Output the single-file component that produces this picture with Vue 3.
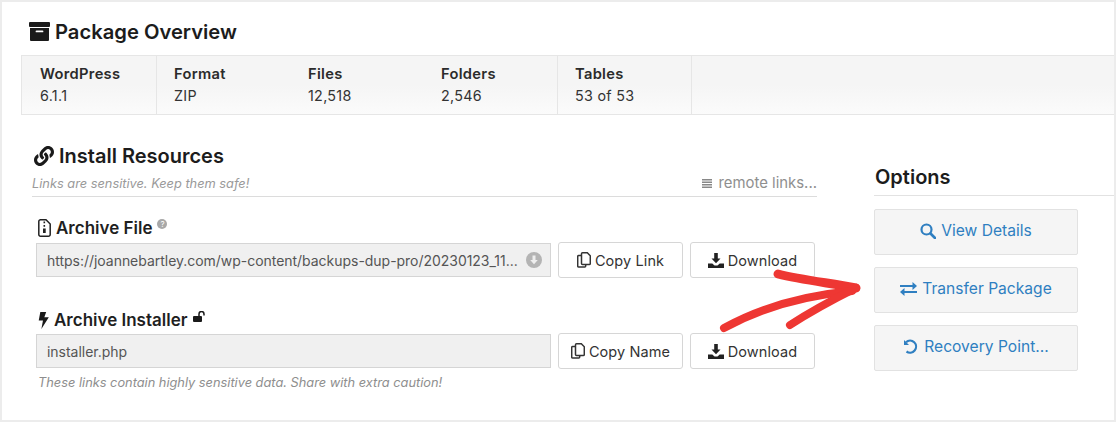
<script setup>
const stats = [
  { label: 'WordPress', value: '6.1.1', w: 135, line: true },
  { label: 'Format', value: 'ZIP', w: 134, line: false },
  { label: 'Files', value: '12,518', w: 133, line: false },
  { label: 'Folders', value: '2,546', w: 134, line: true },
  { label: 'Tables', value: '53 of 53', w: 134, line: true }
]
</script>

<template>
  <div class="page">
    <h1 class="title">
      <svg class="ic-box" viewBox="0 0 21 19"><path d="M1 0h19a1 1 0 0 1 1 1v3a1 1 0 0 1-1 1H1a1 1 0 0 1-1-1V1a1 1 0 0 1 1-1zM1 6h19v12a1 1 0 0 1-1 1H2a1 1 0 0 1-1-1zm6.500 2.500a.8.8 0 0 0 0 1.800h6a.8.8 0 0 0 0-1.800z" fill-rule="evenodd"/></svg>
      Package Overview
    </h1>
    <div class="stats">
      <div v-for="s in stats" :key="s.label" class="cell" :class="{ line: s.line }" :style="{ width: s.w + 'px' }">
        <b>{{ s.label }}</b>
        <span>{{ s.value }}</span>
      </div>
    </div>
    <div class="main">
      <section class="left">
        <h2 class="res">
          <svg class="ic-link" viewBox="0 0 512 512"><path fill="#1a1a1a" d="M326.612 185.391c59.747 59.809 58.927 155.698.36 214.59-.11.12-.24.25-.36.37l-67.2 67.2c-59.27 59.27-155.699 59.262-214.96 0-59.27-59.26-59.27-155.7 0-214.96l37.106-37.106c9.84-9.84 26.786-3.3 27.294 10.606.648 17.722 3.826 35.527 9.69 52.721 1.986 5.822.567 12.262-3.783 16.612l-13.087 13.087c-28.026 28.026-28.905 73.66-1.155 101.96 28.024 28.579 74.086 28.749 102.325.51l67.2-67.19c28.191-28.191 28.073-73.757 0-101.83-3.701-3.694-7.429-6.564-10.341-8.569a16.037 16.037 0 0 1-6.947-12.606c-.396-10.567 3.348-21.456 11.698-29.806l21.054-21.055c5.521-5.521 14.182-6.199 20.584-1.731a152.482 152.482 0 0 1 20.522 17.197zM467.547 44.449c-59.261-59.262-155.69-59.27-214.96 0l-67.2 67.2c-.12.12-.25.25-.36.37-58.566 58.892-59.387 154.781.36 214.59a152.454 152.454 0 0 0 20.521 17.196c6.402 4.468 15.064 3.789 20.584-1.731l21.054-21.055c8.35-8.35 12.094-19.239 11.698-29.806a16.037 16.037 0 0 0-6.947-12.606c-2.912-2.005-6.64-4.875-10.341-8.569-28.073-28.073-28.191-73.639 0-101.83l67.2-67.19c28.239-28.239 74.3-28.069 102.325.51 27.75 28.3 26.872 73.934-1.155 101.96l-13.087 13.087c-4.35 4.35-5.769 10.79-3.783 16.612 5.864 17.194 9.042 34.999 9.69 52.721.509 13.906 17.454 20.446 27.294 10.606l37.106-37.106c59.271-59.259 59.271-155.699.001-214.959z"/></svg>
          Install Resources
        </h2>
        <div class="subrow">
          <i>Links are sensitive. Keep them safe!</i>
          <span class="remote"><svg class="ic-list" viewBox="0 0 10 9"><path d="M0 0h10v1.400H0zM0 2.500h10v1.400H0zM0 5h10v1.400H0zM0 7.500h10v1.400H0z"/></svg> remote links...</span>
        </div>
        <div class="label first">
          <svg class="ic-file" viewBox="0 0 13 18"><path d="M2 .8h6l4.200 4.200V15.500a1.700 1.700 0 0 1-1.700 1.700H2.500A1.700 1.700 0 0 1 .8 15.500V2.500A1.700 1.700 0 0 1 2.500.8z" fill="none" stroke="#222" stroke-width="1.500"/><path d="M5.500 2.500h1.600v1.800H5.500zM5.500 6h1.600v1.800H5.500zM5 9.500h2.700v4.500H5z" fill="#222"/></svg>
          <b>Archive File</b>
          <sup class="q">?</sup>
        </div>
        <div class="row r1">
          <div class="field">
            <span class="url">https://joannebartley.com/wp-content/backups-dup-pro/20230123_11...</span>
            <svg class="ic-dl" viewBox="0 0 16 16"><circle cx="8" cy="8" r="8" fill="#b4b4b4"/><path d="M6.500 3.500h3V8h2.300L8 12.200 4.200 8h2.300z" fill="#eee"/></svg>
          </div>
          <button class="btn copy1">
            <svg class="ic-copy" viewBox="0 0 14 16" fill="none" stroke="#333" stroke-width="1.500"><path d="M4.500 3.500H1.700a1 1 0 0 0-1 1V14a1 1 0 0 0 1 1h6a1 1 0 0 0 1-1v-1.500"/><path d="M5.500.8h4.800l3 3v7.700a1 1 0 0 1-1 1H5.500a1 1 0 0 1-1-1v-9.700a1 1 0 0 1 1-1z"/></svg>
            Copy Link
          </button>
          <button class="btn dl">
            <svg class="ic-down" viewBox="0 0 16 15"><path d="M6.200 0h3.600v5.500h2.700L8 10.200 3.500 5.500h2.700zM0 10.500h4.300L6.500 12.500h3l2.200-2H16V15H0z" fill="#222"/></svg>
            Download
          </button>
        </div>
        <div class="label second">
          <svg class="ic-bolt" viewBox="0 0 10 16"><path d="M2 0h5.500L5.800 5H10L3 16l1.500-8H.5z" fill="#1a1a1a"/></svg>
          <b>Archive Installer</b>
          <svg class="ic-lock" viewBox="0 0 13 11"><rect x="0" y="5" width="9" height="6" rx="1" fill="#1a1a1a"/><path d="M6 5V3a2.500 2.500 0 0 1 5 0v1.500" fill="none" stroke="#1a1a1a" stroke-width="1.500"/></svg>
        </div>
        <div class="row r2">
          <div class="field"><span class="url">installer.php</span></div>
          <button class="btn copy1">
            <svg class="ic-copy" viewBox="0 0 14 16" fill="none" stroke="#333" stroke-width="1.500"><path d="M4.500 3.500H1.700a1 1 0 0 0-1 1V14a1 1 0 0 0 1 1h6a1 1 0 0 0 1-1v-1.500"/><path d="M5.500.8h4.800l3 3v7.700a1 1 0 0 1-1 1H5.500a1 1 0 0 1-1-1v-9.700a1 1 0 0 1 1-1z"/></svg>
            Copy Name
          </button>
          <button class="btn dl">
            <svg class="ic-down" viewBox="0 0 16 15"><path d="M6.200 0h3.600v5.500h2.700L8 10.200 3.500 5.500h2.700zM0 10.500h4.300L6.500 12.500h3l2.200-2H16V15H0z" fill="#222"/></svg>
            Download
          </button>
        </div>
        <i class="warn">These links contain highly sensitive data. Share with extra caution!</i>
      </section>
      <aside class="right">
        <h2 class="opt">Options</h2>
        <button class="act">
          <svg class="ic-act" viewBox="0 0 16 16" fill="none" stroke="#2f7fc1" stroke-width="2.200"><circle cx="6.500" cy="6.500" r="5"/><path d="M10.500 10.500l4.500 4.500" stroke-linecap="round" stroke-width="2.600"/></svg>
          View Details
        </button>
        <button class="act">
          <svg class="ic-act wide" viewBox="0 0 17 14" fill="#2f7fc1"><path d="M0 3h12.500V0L17 4l-4.500 4V5H0zM17 9H4.500V6L0 10l4.500 4v-3H17z"/></svg>
          Transfer Package
        </button>
        <button class="act">
          <svg class="ic-act" viewBox="0 0 16 16" fill="none" stroke="#2f7fc1" stroke-width="2.200"><path d="M3 3.200A6 6 0 1 1 3.500 12.500"/><path d="M1 1v5h5z" fill="#2f7fc1" stroke="none"/></svg>
          Recovery Point...
        </button>
      </aside>
    </div>
    <svg class="arrow" viewBox="0 0 170 80" fill="none" stroke="#ee3733" stroke-linecap="round">
      <path d="M78 14C102 20 130 23 156 28" stroke-width="9"/>
      <path d="M24 68C60 48 100 36 152 31" stroke-width="8"/>
      <path d="M90 65C110 52 132 40 156 28" stroke-width="8"/>
    </svg>
  </div>
</template>

<style>
html, body { margin: 0; background: #fff; }
</style>

<style scoped>
.page {
  position: relative;
  box-sizing: border-box;
  width: 1116px;
  height: 422px;
  overflow: hidden;
  padding: 17px 0 0 21px;
  border: 2px solid #ececec;
  font-family: Inter, "Liberation Sans", sans-serif;
  color: #333;
}
.title {
  display: flex;
  align-items: center;
  gap: 5px;
  margin: 0 0 0 6px;
  height: 24px;
  font-size: 20.200px;
  font-weight: 600;
  color: #1c1c1c;
}
.ic-box { width: 21px; height: 19px; fill: #1a1a1a; }
.stats {
  display: flex;
  height: 58px;
  margin: 12px 0 0 -2px;
  border: solid #e6e6e6;
  border-width: 1px 0 1px 1px;
  background: linear-gradient(#f5f5f5, #f5f5f5 50%, #fbfbfb);
}
.cell {
  box-sizing: border-box;
  padding: 7px 0 0 17px;
  font-size: 14.300px;
  line-height: 22px;
  display: flex;
  flex-direction: column;
  letter-spacing: .3px;
}
.cell:first-child { padding-left: 18px; }
.cell.line { border-right: 1px solid #e6e6e6; }
.cell b { font-weight: 600; font-size: 14.700px; color: #2b2b2b; }
.main { display: flex; }
.left { width: 785px; margin-left: 9px; flex: none; }
.res {
  display: flex;
  align-items: center;
  gap: 5px;
  margin: 28px 0 0 2px;
  height: 25px;
  font-size: 20px;
  font-weight: 600;
  color: #1c1c1c;
}
.ic-link { width: 20px; height: 20px; }
.subrow {
  display: flex;
  justify-content: space-between;
  align-items: flex-end;
  height: 24px;
  padding: 0 0 4px;
  border-bottom: 1px solid #dcdcdc;
  font-size: 12.800px;
  color: #9a9a9a;
}
.subrow i { margin-bottom: 1px; }
.remote { font-size: 14.900px; color: #8f8f8f; }
.ic-list { width: 10px; height: 9px; fill: #888; margin-right: 2px; }
.label {
  display: flex;
  align-items: center;
  gap: 5px;
  height: 22px;
  padding-left: 6px;
  font-size: 17px;
  color: #1f1f1f;
}
.label b { font-weight: 600; }
.first { margin-top: 20px; }
.second { margin-top: 31px; }
.ic-file { width: 13px; height: 18px; }
.ic-bolt { width: 11px; height: 17px; }
.ic-lock { width: 13px; height: 11px; margin: -8px 0 0 0; }
.q {
  width: 10px;
  height: 10px;
  border-radius: 50%;
  background: #a8a8a8;
  color: #fff;
  font-size: 8px;
  line-height: 10px;
  text-align: center;
  margin: -8px 0 0 0;
}
.row { display: flex; gap: 7px; height: 36px; padding-left: 4px; }
.r1 { margin-top: 3px; }
.r2 { margin-top: 2px; }
.field {
  box-sizing: border-box;
  width: 515px;
  height: 34px;
  margin-top: 1px;
  display: flex;
  align-items: center;
  justify-content: space-between;
  padding: 0 8px 0 10px;
  background: #f0f0f0;
  border: 1px solid #d5d5d5;
  font-size: 14px;
  letter-spacing: -.03px;
  color: #555;
}
.url { white-space: nowrap; }
.ic-dl { width: 16px; height: 16px; flex: none; }
.btn {
  box-sizing: border-box;
  width: 125px;
  height: 36px;
  display: flex;
  align-items: center;
  justify-content: center;
  gap: 4px;
  background: #fff;
  border: 1px solid #d6d6d6;
  border-radius: 3px;
  font: inherit;
  font-size: 14.500px;
  letter-spacing: .1px;
  color: #333;
  padding: 0;
}
.ic-copy { width: 14px; height: 16px; }
.ic-down { width: 16px; height: 15px; }
.warn { display: block; margin: 6px 0 0 6px; font-size: 12.800px; color: #8e8e8e; }
.right { flex: 1; margin-left: 57px; }
.opt {
  margin: 47px 0 0;
  padding-left: 1px;
  height: 33px;
  font-size: 20px;
  font-weight: 600;
  line-height: 30px;
  color: #1c1c1c;
  border-bottom: 1px solid #e2e2e2;
}
.act {
  box-sizing: border-box;
  display: flex;
  align-items: center;
  justify-content: center;
  gap: 5px;
  width: 204px;
  height: 46px;
  margin-top: 13px;
  background: #f5f5f5;
  border: 1px solid #e2e2e2;
  border-radius: 2px;
  font: inherit;
  font-size: 15.600px;
  color: #2f7fc1;
  padding: 0 0 3px;
}
.act + .act { margin-top: 12px; }
.ic-act { width: 16px; height: 16px; }
.wide { width: 17px; height: 14px; }
.arrow { position: absolute; left: 698px; top: 258px; width: 170px; height: 80px; }
</style>
